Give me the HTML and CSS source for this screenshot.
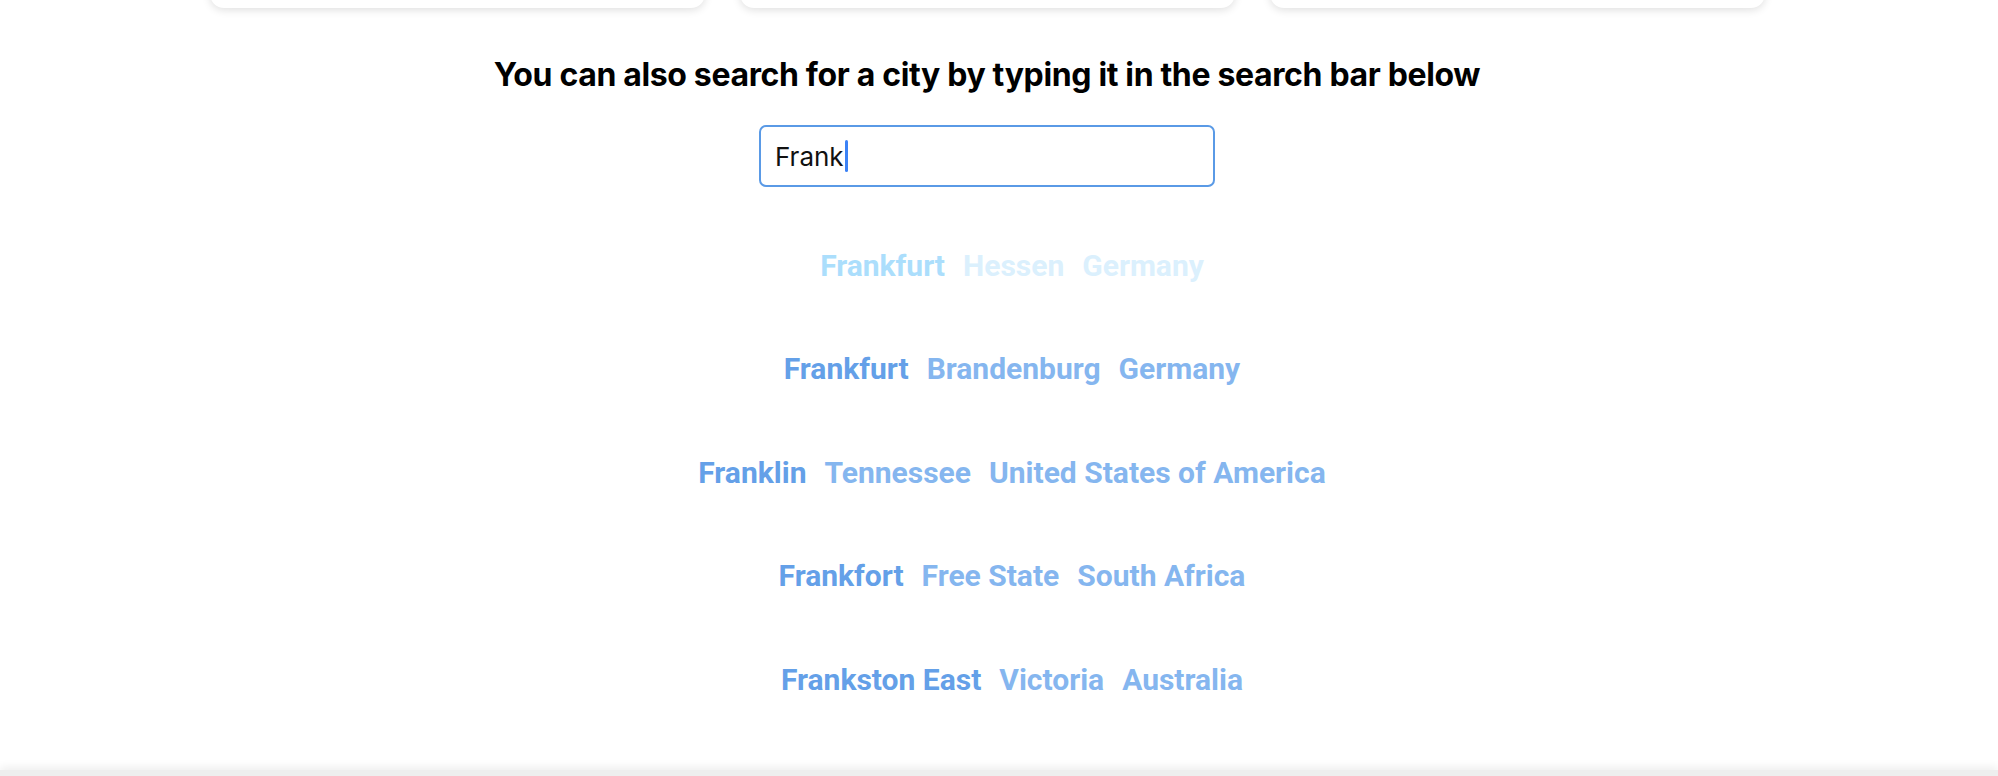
FILE: index.html
```html
<!DOCTYPE html>
<html>
<head>
<meta charset="utf-8">
<link rel="stylesheet" href="styles.css">
</head>
<body>
<div class="page">
  <div class="cards">
    <div class="card"></div>
    <div class="card"></div>
    <div class="card"></div>
  </div>
  <h2 class="heading">You can also search for a city by typing it in the search bar below</h2>
  <div class="search">
    <div class="input"><span class="typed">Frank</span><span class="caret"></span></div>
  </div>
  <ul class="results">
    <li class="row fading"><span class="city">Frankfurt</span><span class="region">Hessen</span><span class="country">Germany</span></li>
    <li class="row"><span class="city">Frankfurt</span><span class="region">Brandenburg</span><span class="country">Germany</span></li>
    <li class="row"><span class="city">Franklin</span><span class="region">Tennessee</span><span class="country">United States of America</span></li>
    <li class="row"><span class="city">Frankfort</span><span class="region">Free State</span><span class="country">South Africa</span></li>
    <li class="row"><span class="city">Frankston East</span><span class="region">Victoria</span><span class="country">Australia</span></li>
  </ul>
</div>
<div class="footer"></div>
</body>
</html>
```

FILE: styles.css
```css
html, body {
  margin: 0;
  padding: 0;
  background: #ffffff;
  height: 776px;
  overflow: hidden;
}
body {
  font-family: Roboto, "Liberation Sans", Arial, sans-serif;
  position: relative;
}
.page {
  width: 1974px;
  display: flex;
  flex-direction: column;
  align-items: center;
}
.cards {
  display: flex;
  gap: 35px;
  height: 8px;
  overflow: visible;
}
.card {
  width: 495px;
  height: 30px;
  margin-top: -22px;
  background: #fff;
  border-radius: 14px;
  box-shadow: 0 2px 8px rgba(0, 0, 0, 0.13);
}
.heading {
  margin: 47px 0 0;
  font-family: Inter, "Liberation Sans", Arial, sans-serif;
  font-weight: 700;
  font-size: 32px;
  line-height: 40px;
  color: #000;
  letter-spacing: -0.35px;
}
.search {
  margin-top: 30px;
}
.input {
  box-sizing: border-box;
  width: 456px;
  height: 62px;
  border: 2px solid #5a9ae6;
  border-radius: 7px;
  padding: 0 14px;
  display: flex;
  align-items: center;
  font-family: Inter, "Liberation Sans", Arial, sans-serif;
  font-size: 26px;
  color: #111;
}
.caret {
  display: inline-block;
  width: 3px;
  height: 32px;
  background: #3b82f6;
  border-radius: 2px;
  margin-left: 1px;
}
.results {
  list-style: none;
  margin: 58px 0 0;
  padding: 0 0 0 50px;
  display: flex;
  flex-direction: column;
  align-items: center;
  gap: 63.5px;
}
.row {
  display: flex;
  gap: 18px;
  height: 40px;
  align-items: center;
  font-weight: 700;
  font-size: 30px;
}
.city { color: #64a0e8; }
.region, .country { color: #85b6ef; }
.fading .city { color: #abdefc; }
.fading .region, .fading .country { color: #dbf0fd; }
.footer {
  position: absolute;
  left: 0;
  right: 0;
  top: 770px;
  height: 10px;
  background: #eeeeee;
  box-shadow: 0 -3px 8px rgba(0, 0, 0, 0.07);
}
```
